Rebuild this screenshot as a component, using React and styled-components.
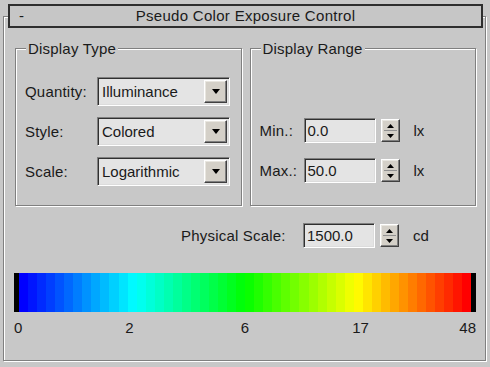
import React from "react";
import styled, { createGlobalStyle } from "styled-components";

const GlobalStyle = createGlobalStyle`
  html, body {
    margin: 0;
    padding: 0;
    background: #c8c8c8;
  }
  body {
    font-family: "Liberation Sans", Arial, sans-serif;
    font-size: 15px;
    color: #1a1a1a;
  }
`;

// spectrum bands: blue -> cyan -> green -> yellow -> red
const BAND_COUNT = 50;
const bands = Array.from({ length: BAND_COUNT }, (_, i) => {
  const hue = 240 - (240 * i) / (BAND_COUNT - 1);
  return `hsl(${hue.toFixed(1)}, 100%, 50%)`;
});

const ticks = [
  { label: "0", align: "flex-start" },
  { label: "2", align: "center" },
  { label: "6", align: "center" },
  { label: "17", align: "center" },
  { label: "48", align: "flex-end" },
];

const App = () => {
  return (
    <>
      <GlobalStyle />
      <Page>
        <Frame>
          <TitleBar>
            <Collapse>-</Collapse>
            <TitleText>Pseudo Color Exposure Control</TitleText>
            <span />
          </TitleBar>

          <Groups>
            <Group>
              <Legend>Display Type</Legend>
              <TypeRows>
                <Row>
                  <Label $width={72}>Quantity:</Label>
                  <Dropdown value="Illuminance" />
                </Row>
                <Row>
                  <Label $width={72}>Style:</Label>
                  <Dropdown value="Colored" />
                </Row>
                <Row>
                  <Label $width={72}>Scale:</Label>
                  <Dropdown value="Logarithmic" />
                </Row>
              </TypeRows>
            </Group>

            <Group>
              <Legend>Display Range</Legend>
              <RangeRows>
                <Row>
                  <Label $width={44}>Min.:</Label>
                  <Spinner value="0.0" unit="lx" />
                </Row>
                <Row>
                  <Label $width={44}>Max.:</Label>
                  <Spinner value="50.0" unit="lx" />
                </Row>
              </RangeRows>
            </Group>
          </Groups>

          <PhysicalRow>
            <Label $width={122}>Physical Scale:</Label>
            <Spinner value="1500.0" unit="cd" />
          </PhysicalRow>

          <ColorBar>
            <EndCap />
            {bands.map((c, i) => (
              <Band key={i} $color={c} />
            ))}
            <EndCap />
          </ColorBar>

          <Ticks>
            {ticks.map((t) => (
              <Tick key={t.label} $align={t.align}>
                <span>{t.label}</span>
              </Tick>
            ))}
          </Ticks>
        </Frame>
      </Page>
    </>
  );
};

const Dropdown = ({ value }) => (
  <Select>
    <SelectText>{value}</SelectText>
    <DropButton>
      <svg width="8" height="5" viewBox="0 0 8 5">
        <path d="M0 0 H8 L4 5 Z" fill="#000" />
      </svg>
    </DropButton>
  </Select>
);

const Spinner = ({ value, unit }) => (
  <>
    <NumberField>{value}</NumberField>
    <SpinButtons>
      <SpinHalf>
        <svg width="7" height="4" viewBox="0 0 7 4">
          <path d="M3.5 0 L7 4 H0 Z" fill="#000" />
        </svg>
      </SpinHalf>
      <SpinDivider />
      <SpinHalf>
        <svg width="7" height="4" viewBox="0 0 7 4">
          <path d="M0 0 H7 L3.5 4 Z" fill="#000" />
        </svg>
      </SpinHalf>
    </SpinButtons>
    <Unit>{unit}</Unit>
  </>
);

const Page = styled.div`
  width: 490px;
  height: 367px;
  box-sizing: border-box;
  padding: 16px 4px 0 3px;
  overflow: hidden;
`;

const Frame = styled.div`
  height: 345px;
  box-sizing: border-box;
  border: 1px solid #808080;
  box-shadow: inset 1px 1px 0 #fff, 1px 1px 0 #fff;
`;

const TitleBar = styled.div`
  height: 24px;
  box-sizing: border-box;
  margin: -13px 2px 0 4px;
  border: 2px solid #2e2e2e;
  background: #c6c6c6;
  display: grid;
  grid-template-columns: 1fr auto 1fr;
  align-items: center;
`;

const Collapse = styled.span`
  padding-left: 9px;
  line-height: 18px;
`;

const TitleText = styled.span`
  letter-spacing: 0.3px;
  line-height: 18px;
`;

const Groups = styled.div`
  display: flex;
  gap: 8px;
  margin: 20px 9px 0 11px;
`;

const Group = styled.div`
  position: relative;
  flex: 1;
  height: 158px;
  box-sizing: border-box;
  border: 1px solid #808080;
  box-shadow: inset 1px 1px 0 #fff, 1px 1px 0 #fff;
  display: flex;
  flex-direction: column;
`;

const Legend = styled.span`
  position: absolute;
  top: -9px;
  left: 10px;
  padding: 0 2px;
  background: #c8c8c8;
  line-height: 17px;
  letter-spacing: 0.2px;
`;

const TypeRows = styled.div`
  display: flex;
  flex-direction: column;
  gap: 11px;
  padding: 28px 0 0 9px;
`;

const RangeRows = styled.div`
  margin-top: auto;
  display: flex;
  flex-direction: column;
  gap: 15px;
  padding: 0 0 22px 9px;
`;

const Row = styled.div`
  display: flex;
  align-items: center;
`;

const Label = styled.span`
  width: ${(p) => p.$width}px;
  flex-shrink: 0;
  white-space: nowrap;
  letter-spacing: 0.2px;
`;

const sunken = `
  box-sizing: border-box;
  border: 1px solid;
  border-color: #808080 #ffffff #ffffff #808080;
  box-shadow: inset 1px 1px 0 #303030, inset -1px -1px 0 #dcdcdc;
  background: #e4e4e4;
`;

const raised = `
  box-sizing: border-box;
  border: 1px solid;
  border-color: #ffffff #404040 #404040 #ffffff;
  box-shadow: inset -1px -1px 0 #808080, inset 1px 1px 0 #e8e6e0;
  background: #d4d0c8;
`;

const Select = styled.div`
  ${sunken}
  width: 133px;
  height: 29px;
  display: flex;
  align-items: center;
  padding: 2px 2px 2px 4px;
`;

const SelectText = styled.span`
  flex: 1;
`;

const DropButton = styled.div`
  ${raised}
  width: 23px;
  height: 23px;
  display: flex;
  align-items: center;
  justify-content: center;
`;

const NumberField = styled.div`
  ${sunken}
  width: 72px;
  height: 25px;
  padding: 0 3px;
  display: flex;
  align-items: center;
`;

const SpinButtons = styled.div`
  ${raised}
  display: flex;
  flex-direction: column;
  width: 19px;
  height: 23px;
  margin-left: 5px;
  padding: 1px 0;
`;

const SpinHalf = styled.div`
  flex: 1;
  display: flex;
  align-items: center;
  justify-content: center;
`;

const SpinDivider = styled.div`
  height: 1px;
  margin: 0 2px;
  background: #909090;
`;

const Unit = styled.span`
  margin-left: 14px;
`;

const PhysicalRow = styled.div`
  display: flex;
  align-items: center;
  margin: 17px 0 0 177px;
`;

const ColorBar = styled.div`
  display: flex;
  height: 39px;
  margin: 25px 9px 0 10px;
`;

const EndCap = styled.div`
  width: 5px;
  background: #000;
`;

const Band = styled.div`
  flex: 1;
  background: ${(p) => p.$color};
`;

const Ticks = styled.div`
  display: flex;
  justify-content: space-between;
  margin: 7px 9px 0 10px;
  line-height: 17px;
`;

const Tick = styled.div`
  width: 0;
  display: flex;
  justify-content: ${(p) => p.$align};
  white-space: nowrap;
`;

export default App;
